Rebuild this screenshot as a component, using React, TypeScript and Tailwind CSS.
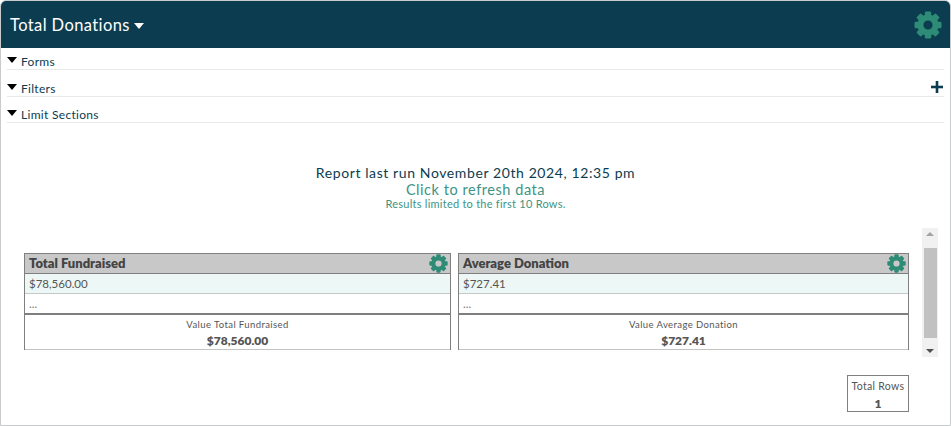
function Gear({ className }: { className: string }) {
  return (
    <svg viewBox="0 0 28 28" className={className} fill="currentColor">
      {[0, 45, 90, 135, 180, 225, 270, 315].map((a) => (
        <rect key={a} x="10.8" y="0.5" width="6.4" height="6" rx="1.2" transform={`rotate(${a} 14 14)`} />
      ))}
      <circle cx="14" cy="14" r="7.6" fill="none" stroke="currentColor" strokeWidth="6" />
    </svg>
  );
}

function Section({ label, plus, gap }: { label: string; plus?: boolean; gap: string }) {
  return (
    <div className={`${gap} relative flex items-center h-[22px] pt-[5px] mx-[6px] border-b border-[#e8eaea] text-[12px] text-[#0b3c50]`}>
      <div className="w-0 h-0 border-x-[5.5px] border-x-transparent border-t-[6.5px] border-t-black -mt-[3px] mr-[4px]" />
      <span className="pt-[2px] tracking-[0.3px]">{label}</span>
      {plus && (
        <svg viewBox="0 0 12 12" className="absolute right-[1px] top-[6px] w-[12px] h-[12px] text-[#0b3c50]" fill="currentColor">
          <rect x="4.7" y="0" width="2.6" height="12" />
          <rect x="0" y="4.7" width="12" height="2.6" />
        </svg>
      )}
    </div>
  );
}

function Card({ title, value, width }: { title: string; value: string; width: string }) {
  return (
    <div className={`${width} border-x border-t border-[#7f7f7f] text-[#555555]`}>
      <div className="flex items-center justify-between h-[20px] bg-[#c8c8c8] border-b border-[#7f7f7f] pl-1 pr-[2px]">
        <span className="text-[13px] font-[800] text-[#444444]">{title}</span>
        <Gear className="w-[19px] h-[19px] text-[#2e8b76]" />
      </div>
      <div className="flex items-center h-[20px] bg-[#edf7f5] border-b border-[#c4c9c8] px-1 text-[11.5px]">{value}</div>
      <div className="flex items-center h-[21px] border-b-2 border-[#7f7f7f] px-1 text-[11.5px] text-[#777777]">...</div>
      <div className="h-[35px] border-b border-[#c4c4c4] text-center">
        <div className="text-[9.5px] pt-[3px] leading-[13px] tracking-[0.4px]">Value {title}</div>
        <div className="text-[12px] font-[800] pt-[3px] leading-[14px]">{value}</div>
      </div>
    </div>
  );
}

export default function App() {
  return (
    <div className="w-[951px] h-[426px] overflow-hidden bg-white border border-[#c9cccc] rounded-t-[6px] font-['Lato',sans-serif]">
      {/* Header */}
      <div className="flex items-center justify-between h-[47px] bg-[#0b3c50] pl-[9px] pr-[8px]">
        <div className="flex items-center pt-[1px] text-white text-[16.5px] tracking-[0.4px]">
          Total Donations
          <div className="w-0 h-0 border-x-[5px] border-x-transparent border-t-[6px] border-t-white ml-[4px] mt-[1px]" />
        </div>
        <Gear className="w-[28px] h-[28px] text-[#2e8b76]" />
      </div>

      {/* Filters */}
      <Section label="Forms" gap="mt-0" />
      <Section label="Filters" plus gap="mt-[5px]" />
      <Section label="Limit Sections" gap="mt-[4px]" />

      {/* Report info */}
      <div className="flex flex-col items-center pt-[41px] tracking-[0.6px]">
        <div className="text-[14px] leading-[17px] text-[#0b3c50]">Report last run November 20th 2024, 12:35 pm</div>
        <div className="text-[14.5px] leading-[18px] text-[#3d9484] tracking-[0.55px]">Click to refresh data</div>
        <div className="text-[11px] leading-[11px] -mt-[1px] text-[#3d9484] tracking-[0.25px]">Results limited to the first 10 Rows.</div>
      </div>

      {/* Cards */}
      <div className="flex items-start pl-[23px] pt-[19px]">
        <div className="flex gap-[7px] pt-[25px]">
          <Card title="Total Fundraised" value="$78,560.00" width="w-[427px]" />
          <Card title="Average Donation" value="$727.41" width="w-[451px]" />
        </div>
        <div className="flex flex-col items-center justify-between w-[16px] h-[129px] ml-[13px] bg-[#f1f1f1] py-[4px]">
          <div className="w-0 h-0 border-x-[4px] border-x-transparent border-b-[4px] border-b-[#a3a3a3]" />
          <div className="w-[13px] h-[90px] bg-[#c1c1c1]" />
          <div className="w-0 h-0 border-x-[4px] border-x-transparent border-t-[4px] border-t-[#505050]" />
        </div>
      </div>

      {/* Total rows */}
      <div className="flex justify-end pr-[41px] pt-[18px]">
        <div className="w-[62px] h-[37px] border border-[#7f7f7f] text-center text-[#555555]">
          <div className="text-[10.5px] pt-[3px] leading-[14px] tracking-[0.3px]">Total Rows</div>
          <div className="text-[12px] font-[800] pt-[4px] leading-[14px]">1</div>
        </div>
      </div>
    </div>
  );
}
